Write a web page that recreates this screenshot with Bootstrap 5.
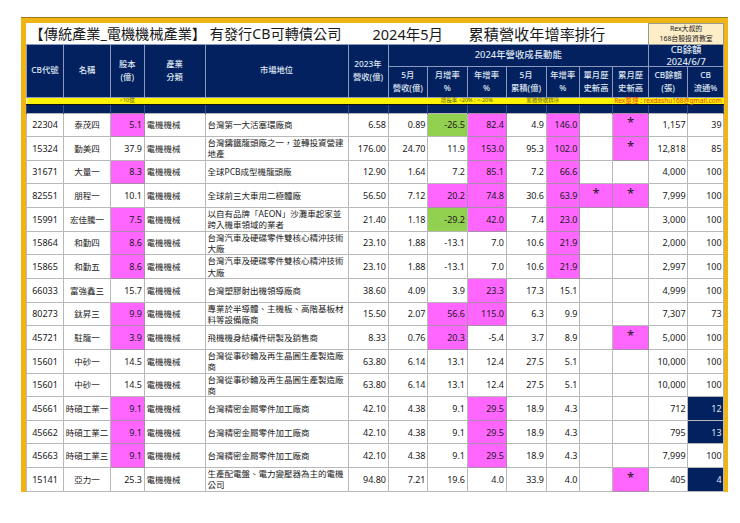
<!DOCTYPE html>
<html lang="zh-Hant">
<head>
<meta charset="UTF-8">
<title>電機機械產業 CB</title>
<link href="https://cdn.jsdelivr.net/npm/bootstrap@5.3.0/dist/css/bootstrap.min.css" rel="stylesheet">
<style>
  body { background: #fff; font-family: "Noto Sans", "Noto Sans CJK TC", sans-serif; color: #1a1a1a; }
  .sheet { width: 707px; margin: 18px 0 0 21px; border: solid #f0b414; border-width: 5px 5px 0 5px; box-shadow: 0 -1px 0 #9a7a20; }
  .cbt { table-layout: fixed; width: 697px; border-collapse: collapse; margin: 0; font-size: 8.5px; line-height: 11.3px; }
  .cbt td, .cbt th { padding: 0 2px; vertical-align: middle; border: 1px solid #b8b8b8; overflow: visible; }
  .cbt .title-cell { height: 20.5px; border: 0; background: #fff; font-size: 14.5px; line-height: 20px; white-space: nowrap; color: #1a1a1a; font-weight: 400; padding: 0 0 0 3px; }
  .t1 { width: 343px; font-size: 14.2px; }
  .t2 { width: 96px; }
  .t3 { font-size: 15.2px; }
  .cbt .rex { background: #fdeec8; font-size: 6.9px; line-height: 9.5px; text-align: center; border: 1px solid #999; font-weight: 400; padding: 0; }
  .head th { background: #04215f; color: #dfe6f2; border-color: #8b9ac0; font-weight: 500; font-size: 8.3px; line-height: 12.5px; text-align: center; padding: 0; }
  .head .big { font-size: 9.4px; }
  .cbx { height: 21px; line-height: 12px; margin-top: -1px; }
  .row-group th { height: 22px; }
  .row-sub th { height: 31px; }
  .cbt .yel td { background: #fff200; height: 7.5px; padding: 0; font-size: 5.5px; line-height: 5px; text-align: center; color: #55602a; border: 0; border-top: 1px solid #111; border-bottom: 1px solid #111; white-space: nowrap; }
  .cbt .yel .mailto { color: #e8431f; font-size: 6.6px; }
  .cbt .gap td { background: #04215f; height: 8.5px; padding: 0; border: 0; border-left: 1px solid #3a4f86; border-right: 1px solid #3a4f86; }
  .data td { height: 23.65px; background: #fff; }
  .c { text-align: center; }
  .cbt .c { padding: 0; }
  .cbt .r { text-align: right; font-size: 9px; padding: 0 1.5px 0 0; }
  .code { font-size: 9px; }
  .cbt .pk { background: #ff66ff; border-color: #a98aa9; }
  .cbt .gr { background: #92d050; }
  .cbt .nv { background: #04215f; color: #dfe6f2; }
  .cbt .st { font-size: 13px; line-height: 10px; text-align: center; padding: 0 0 5px 0; color: #1a1a1a; }
</style>
</head>
<body>
<div class="sheet">
<table class="cbt">
  <colgroup>
    <col style="width:37px"><col style="width:47px"><col style="width:33.5px"><col style="width:61px"><col style="width:143px"><col style="width:40px"><col style="width:39.5px"><col style="width:39.5px"><col style="width:39px"><col style="width:40px"><col style="width:33.5px"><col style="width:33px"><col style="width:36px"><col style="width:39px"><col style="width:36px">
  </colgroup>
  <thead>
    <tr>
      <th colspan="13" class="title-cell"><div class="d-flex"><span class="t1">【傳統產業_電機機械產業】 有發行CB可轉債公司</span><span class="t2">2024年5月</span><span class="t3">累積營收年增率排行</span></div></th>
      <th colspan="2" class="rex">Rex大叔的<br>168台股投資教室</th>
    </tr>
    <tr class="head row-group">
      <th rowspan="2">CB代號</th>
      <th rowspan="2">名稱</th>
      <th rowspan="2">股本<br>(億)</th>
      <th rowspan="2">產業<br>分類</th>
      <th rowspan="2">市場地位</th>
      <th rowspan="2">2023年<br>營收(億)</th>
      <th colspan="7" class="big">2024年營收成長動能</th>
      <th colspan="2" class="big"><div class="cbx">CB餘額<br>2024/6/7</div></th>
    </tr>
    <tr class="head row-sub">
      <th>5月<br>營收(億)</th>
      <th>月增率<br>%</th>
      <th>年增率<br>%</th>
      <th>5月<br>累積(億)</th>
      <th>年增率<br>%</th>
      <th>單月歷<br>史新高</th>
      <th>累月歷<br>史新高</th>
      <th>CB餘額<br>(張)</th>
      <th>CB<br>流通%</th>
    </tr>
    <tr class="yel">
      <td colspan="2"></td><td>&lt;10億</td><td colspan="4"></td>
      <td colspan="2">增長率 &gt;20% ; &lt;-20%</td>
      <td colspan="2">累積營收排序</td>
      <td></td>
      <td colspan="3" class="mailto">Rex整理 : rexdashu168@gmail.com</td>
    </tr>
    <tr class="gap"><td></td><td></td><td></td><td></td><td></td><td></td><td></td><td></td><td></td><td></td><td></td><td></td><td></td><td></td><td></td></tr>
  </thead>
  <tbody id="rows" class="data"></tbody>
</table>
</div>
<script src="https://cdn.jsdelivr.net/npm/bootstrap@5.3.0/dist/js/bootstrap.bundle.min.js"></script>
<script>
  // last two items: pink cells, green cells (index into the row)
  const rows = [
    ["22304","泰茂四","5.1","台灣第一大活塞環廠商","6.58","0.89","-26.5","82.4","4.9","146.0","","*","1,157","39",[2,7,9,11],[6]],
    ["15324","勤美四","37.9","台灣鑄鐵龍頭廠之一，並轉投資營建地產","176.00","24.70","11.9","153.0","95.3","102.0","","*","12,818","85",[7,9,11],[]],
    ["31671","大量一","8.3","全球PCB成型機龍頭廠","12.90","1.64","7.2","85.1","7.2","66.6","","","4,000","100",[2,7,9],[]],
    ["82551","朋程一","10.1","全球前三大車用二極體廠","56.50","7.12","20.2","74.8","30.6","63.9","*","*","7,999","100",[6,7,9,10,11],[]],
    ["15991","宏佳騰一","7.5","以自有品牌「AEON」沙灘車起家並跨入機車領域的業者","21.40","1.18","-29.2","42.0","7.4","23.0","","","3,000","100",[2,7,9],[6]],
    ["15864","和勤四","8.6","台灣汽車及硬碟零件雙核心精沖技術大廠","23.10","1.88","-13.1","7.0","10.6","21.9","","","2,000","100",[2,9],[]],
    ["15865","和勤五","8.6","台灣汽車及硬碟零件雙核心精沖技術大廠","23.10","1.88","-13.1","7.0","10.6","21.9","","","2,997","100",[2,9],[]],
    ["66033","富強鑫三","15.7","台灣塑膠射出機領導廠商","38.60","4.09","3.9","23.3","17.3","15.1","","","4,999","100",[7],[]],
    ["80273","鈦昇三","9.9","專業於半導體、主機板、高階基板材料等設備廠商","15.50","2.07","56.6","115.0","6.3","9.9","","","7,307","73",[2,6,7],[]],
    ["45721","駐龍一","3.9","飛機機身結構件研製及銷售商","8.33","0.76","20.3","-5.4","3.7","8.9","","*","5,000","100",[2,6,11],[]],
    ["15601","中砂一","14.5","台灣從事砂輪及再生晶圓生產製造廠商","63.80","6.14","13.1","12.4","27.5","5.1","","","10,000","100",[],[]],
    ["15601","中砂一","14.5","台灣從事砂輪及再生晶圓生產製造廠商","63.80","6.14","13.1","12.4","27.5","5.1","","","10,000","100",[],[]],
    ["45661","時碩工業一","9.1","台灣精密金屬零件加工廠商","42.10","4.38","9.1","29.5","18.9","4.3","","","712","12",[2,7],[]],
    ["45662","時碩工業二","9.1","台灣精密金屬零件加工廠商","42.10","4.38","9.1","29.5","18.9","4.3","","","795","13",[2,7],[]],
    ["45663","時碩工業三","9.1","台灣精密金屬零件加工廠商","42.10","4.38","9.1","29.5","18.9","4.3","","","7,999","100",[2,7],[]],
    ["15141","亞力一","25.3","生產配電盤、電力變壓器為主的電機公司","94.80","7.21","19.6","4.0","33.9","4.0","","*","405","4",[11],[]]
  ];
  let html = "";
  rows.forEach(r => {
    const cls = i => r[14].includes(i) ? " pk" : r[15].includes(i) ? " gr" : "";
    const num = i => `<td class="r${cls(i)}">${r[i]}</td>`;
    const star = i => r[i] ? `<td class="st${cls(i)}">*</td>` : `<td></td>`;
    const flow = parseInt(r[13]) < 20 ? " nv" : "";
    html += `<tr><td class="code c">${r[0]}</td><td class="c">${r[1]}</td>${num(2)}<td>電機機械</td><td>${r[3]}</td>`;
    [4,5,6,7,8,9].forEach(i => html += num(i));
    html += star(10) + star(11) + `<td class="r">${r[12]}</td><td class="r${flow}">${r[13]}</td></tr>`;
  });
  document.getElementById("rows").innerHTML = html;
</script>
</body>
</html>
